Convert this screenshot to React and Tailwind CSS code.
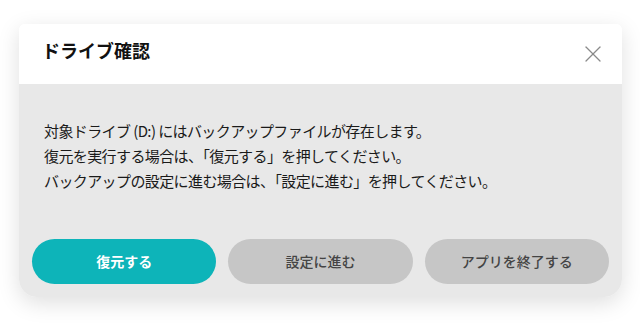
import { X } from 'lucide-react';

const font = { fontFamily: '"Noto Sans CJK JP", "Noto Sans", sans-serif' };

export default function App() {
  return (
    <div className="w-full h-[324px] bg-white pt-[24px] pl-[19px] pr-[18px]" style={font}>
      <div className="w-[603px] h-[273px] flex flex-col rounded-t-[6px] rounded-b-[18px] shadow-[0_6px_22px_rgba(0,0,0,0.13)]">
        {/* Header */}
        <div className="h-[60px] shrink-0 bg-white rounded-t-[6px] flex items-center justify-between pl-[23px] pr-[15px]">
          <h1 className="text-[18px] font-bold text-[#111] leading-none pb-[9px]">ドライブ確認</h1>
          <button className="text-[#8a8a8a]">
            <X className="w-[28px] h-[28px]" strokeWidth={1.1} />
          </button>
        </div>

        {/* Body */}
        <div className="flex-1 bg-[#e8e8e8] rounded-b-[18px] flex flex-col px-[13px] pb-[13px]">
          <div className="pt-[34px] pl-[12px] text-[15px] tracking-[-0.6px] leading-[25px] text-[#1a1a1a]">
            <p>対象ドライブ (D:) にはバックアップファイルが存在します。</p>
            <p>復元を実行する場合は、「復元する」を押してください。</p>
            <p>バックアップの設定に進む場合は、「設定に進む」を押してください。</p>
          </div>
          <div className="mt-auto flex gap-[12px]">
            <button className="flex-1 h-[45px] rounded-full bg-[#0db4b9] text-white text-[14px] font-bold">
              復元する
            </button>
            <button className="flex-1 h-[45px] rounded-full bg-[#c6c6c6] text-[#444] text-[14px] font-medium">
              設定に進む
            </button>
            <button className="flex-1 h-[45px] rounded-full bg-[#c6c6c6] text-[#444] text-[14px] font-medium">
              アプリを終了する
            </button>
          </div>
        </div>
      </div>
    </div>
  );
}
